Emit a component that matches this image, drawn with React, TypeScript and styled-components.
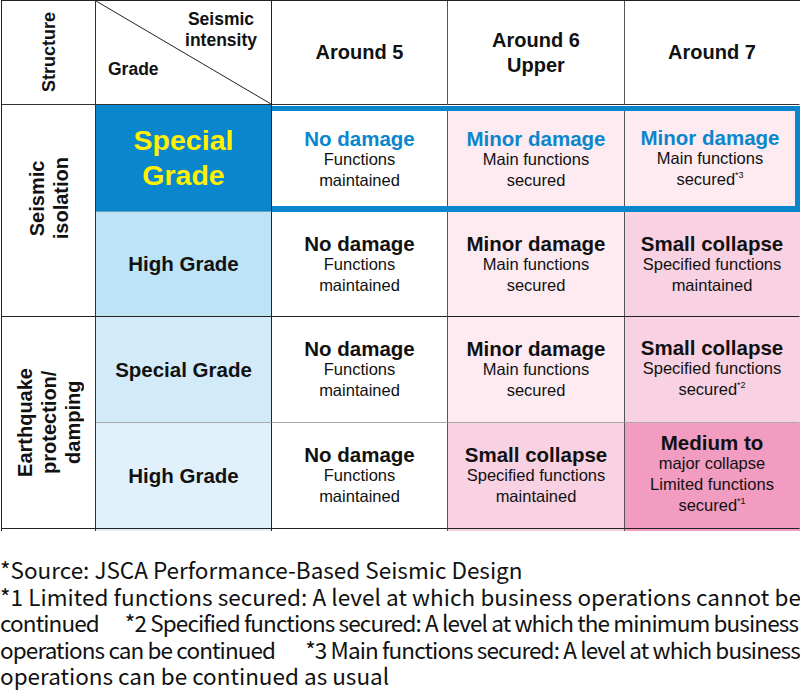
import React from 'react';
import styled, { createGlobalStyle } from 'styled-components';

const Global = createGlobalStyle`
  html, body { margin: 0; padding: 0; background: #fff; }
  body { width: 800px; height: 700px; overflow: hidden; }
`;

const BLUE = '#0a86cc';
const PINK1 = '#fdebf1';
const PINK2 = '#f8d1e2';
const PINK3 = '#f19cc0';

const Page = styled.div`
  width: 800px;
  height: 700px;
  overflow: hidden;
  background: #fff;
`;

const TableClip = styled.div`
  height: 531px;
  overflow: hidden;
`;

const Grid = styled.div`
  display: grid;
  grid-template-columns: 94px 176px 176px 177px 175px;
  grid-template-rows: 104px 107px 105px 106px 106px 30px;
  margin-left: 1px;
  border-left: 1px solid #222;
  border-top: 1px solid #222;
  font-family: "Liberation Sans", Arial, sans-serif;
  color: #111;
`;

const Cell = styled.div<{ $bg?: string; $br?: string; $bb?: string; $span?: number }>`
  box-sizing: border-box;
  background: ${p => p.$bg ?? '#fff'};
  border-right: 1px solid ${p => p.$br ?? '#555'};
  border-bottom: 1px solid ${p => p.$bb ?? '#555'};
  ${p => (p.$span ? `grid-row: span ${p.$span};` : '')}
  display: flex;
  flex-direction: column;
  align-items: center;
  justify-content: center;
  text-align: center;
  overflow: hidden;
`;

const VerticalLabel = styled.div<{ $size: number; $shift?: number }>`
  writing-mode: vertical-rl;
  transform: rotate(180deg);
  font-weight: 700;
  font-size: ${p => p.$size}px;
  line-height: 24px;
  text-align: center;
  white-space: nowrap;
  margin-bottom: ${p => p.$shift ?? 0}px;
`;

const CornerCell = styled(Cell)`
  position: relative;
  align-items: stretch;
  justify-content: space-between;
  padding: 8px 14px 25px 12px;
`;

const Diagonal = styled.svg`
  position: absolute;
  inset: 0;
  width: 100%;
  height: 100%;
  pointer-events: none;
`;

const CornerTop = styled.div`
  align-self: flex-end;
  font-weight: 700;
  font-size: 17.5px;
  line-height: 21px;
  text-align: center;
`;

const CornerBottom = styled.div`
  align-self: flex-start;
  font-weight: 700;
  font-size: 17.5px;
  line-height: 20px;
`;

const HeadText = styled.div`
  font-weight: 700;
  font-size: 20px;
  line-height: 25px;
`;

const GradeText = styled.div<{ $big?: boolean }>`
  font-weight: 700;
  font-size: ${p => (p.$big ? '28.5px' : '20.5px')};
  line-height: ${p => (p.$big ? '35px' : '24px')};
  color: ${p => (p.$big ? '#fff100' : '#111')};
`;

const Frame = styled.div`
  grid-column: 3 / span 3;
  box-sizing: border-box;
  border-top: 5px solid ${BLUE};
  border-right: 5px solid ${BLUE};
  border-bottom: 6px solid ${BLUE};
  margin-top: 1px;
  display: grid;
  grid-template-columns: 176px 177px 1fr;
`;

const InnerCell = styled.div<{ $bg: string; $last?: boolean }>`
  background: ${p => p.$bg};
  border-right: ${p => (p.$last ? 'none' : '1px solid #555')};
  display: flex;
  flex-direction: column;
  align-items: center;
  justify-content: center;
  text-align: center;
  padding-top: 2px;
`;

const Title = styled.div<{ $blue?: boolean }>`
  font-weight: 700;
  font-size: 20.5px;
  line-height: 21px;
  color: ${p => (p.$blue ? BLUE : '#111')};
  white-space: nowrap;
`;

const Sub = styled.div`
  font-size: 16.5px;
  line-height: 21px;
  white-space: nowrap;
`;

const Sup = styled.sup`
  font-size: 9px;
  vertical-align: baseline;
  position: relative;
  top: -7px;
`;

const Notes = styled.div`
  margin-top: 25px;
  font-family: "Noto Sans CJK JP", "Noto Sans", sans-serif;
  font-size: 22.5px;
  line-height: 26.5px;
  color: #111;
`;

const NoteLine = styled.div<{ $ls?: number }>`
  white-space: nowrap;
  letter-spacing: ${p => p.$ls ?? 0}px;
`;

const Gap = styled.span<{ $w: number }>`
  display: inline-block;
  width: ${p => p.$w}px;
`;

type Outcome = { title: string; lines: React.ReactNode[]; bg: string; blue?: boolean; extraRegular?: string };

const OutcomeBody: React.FC<{ o: Outcome }> = ({ o }) => (
  <>
    <Title $blue={o.blue}>{o.title}</Title>
    {o.extraRegular && <Sub>{o.extraRegular}</Sub>}
    {o.lines.map((l, i) => (
      <Sub key={i}>{l}</Sub>
    ))}
  </>
);

const noDamage = (blue?: boolean): Outcome => ({
  title: 'No damage',
  lines: ['Functions', 'maintained'],
  bg: '#fff',
  blue,
});

const minor = (bg: string, blue?: boolean, sup?: string): Outcome => ({
  title: 'Minor damage',
  lines: ['Main functions', sup ? <>secured<Sup>{sup}</Sup></> : 'secured'],
  bg,
  blue,
});

const small = (bg: string, last: React.ReactNode): Outcome => ({
  title: 'Small collapse',
  lines: ['Specified functions', last],
  bg,
});

export default function App() {
  const row1: Outcome[] = [noDamage(true), minor(PINK1, true), minor(PINK1, true, '*3')];
  const row2: Outcome[] = [noDamage(), minor(PINK1), small(PINK2, 'maintained')];
  const row3: Outcome[] = [noDamage(), minor(PINK1), small(PINK2, <>secured<Sup>*2</Sup></>)];
  const row4: Outcome[] = [
    noDamage(),
    small(PINK2, 'maintained'),
    {
      title: 'Medium to',
      extraRegular: 'major collapse',
      lines: ['Limited functions', <>secured<Sup>*1</Sup></>],
      bg: PINK3,
    },
  ];

  return (
    <Page>
      <Global />
      <TableClip>
        <Grid>
          {/* header */}
          <Cell $br="#333" $bb="#333">
            <VerticalLabel $size={18}>Structure</VerticalLabel>
          </Cell>
          <CornerCell $br="#222" $bb="#333">
            <Diagonal viewBox="0 0 100 100" preserveAspectRatio="none">
              <line x1="0" y1="0" x2="100" y2="100" stroke="#222" strokeWidth="1" vectorEffect="non-scaling-stroke" />
            </Diagonal>
            <CornerTop>
              Seismic
              <br />
              intensity
            </CornerTop>
            <CornerBottom>Grade</CornerBottom>
          </CornerCell>
          <Cell $bb="#333">
            <HeadText>Around 5</HeadText>
          </Cell>
          <Cell $bb="#333">
            <HeadText>
              Around 6
              <br />
              Upper
            </HeadText>
          </Cell>
          <Cell $br="transparent" $bb="#333">
            <HeadText>Around 7</HeadText>
          </Cell>

          {/* seismic isolation */}
          <Cell $span={2} $br="#333" $bb="#222">
            <VerticalLabel $size={20} $shift={24}>
              Seismic
              <br />
              isolation
            </VerticalLabel>
          </Cell>
          <Cell $bg={BLUE} $br="#222" $bb="#6a9ec0">
            <GradeText $big>
              Special
              <br />
              Grade
            </GradeText>
          </Cell>
          <Frame>
            {row1.map((o, i) => (
              <InnerCell key={i} $bg={o.bg} $last={i === 2}>
                <OutcomeBody o={o} />
              </InnerCell>
            ))}
          </Frame>

          <Cell $bg="#bde3f7" $br="#222" $bb="#222">
            <GradeText>High Grade</GradeText>
          </Cell>
          {row2.map((o, i) => (
            <Cell key={i} $bg={o.bg} $br={i === 2 ? 'transparent' : '#555'} $bb="#222">
              <OutcomeBody o={o} />
            </Cell>
          ))}

          {/* earthquake protection */}
          <Cell $span={2} $br="#333" $bb="#222">
            <VerticalLabel $size={20}>
              Earthquake
              <br />
              protection/
              <br />
              damping
            </VerticalLabel>
          </Cell>
          <Cell $bg="#d3ebf8" $br="#222" $bb="#aaa">
            <GradeText>Special Grade</GradeText>
          </Cell>
          {row3.map((o, i) => (
            <Cell key={i} $bg={o.bg} $br={i === 2 ? 'transparent' : '#555'} $bb="#aaa">
              <OutcomeBody o={o} />
            </Cell>
          ))}

          <Cell $bg="#e1f1fb" $br="#222" $bb="#222">
            <GradeText>High Grade</GradeText>
          </Cell>
          {row4.map((o, i) => (
            <Cell key={i} $bg={o.bg} $br={i === 2 ? 'transparent' : '#555'} $bb="#222">
              <OutcomeBody o={o} />
            </Cell>
          ))}

          {/* clipped next row */}
          <Cell $br="#333" $bb="transparent" />
          <Cell $bg="#e1f1fb" $br="#222" $bb="transparent" />
          <Cell $br="#555" $bb="transparent" />
          <Cell $bg={PINK2} $br="#555" $bb="transparent" />
          <Cell $bg={PINK3} $br="transparent" $bb="transparent" />
        </Grid>
      </TableClip>
      <Notes>
        <NoteLine>*Source: JSCA Performance-Based Seismic Design</NoteLine>
        <NoteLine $ls={0.05}>*1 Limited functions secured: A level at which business operations cannot be</NoteLine>
        <NoteLine $ls={-0.88}>
          continued
          <Gap $w={26} />
          *2 Specified functions secured: A level at which the minimum business
        </NoteLine>
        <NoteLine $ls={-0.88}>
          operations can be continued
          <Gap $w={30} />
          *3 Main functions secured: A level at which business
        </NoteLine>
        <NoteLine>operations can be continued as usual</NoteLine>
      </Notes>
    </Page>
  );
}
